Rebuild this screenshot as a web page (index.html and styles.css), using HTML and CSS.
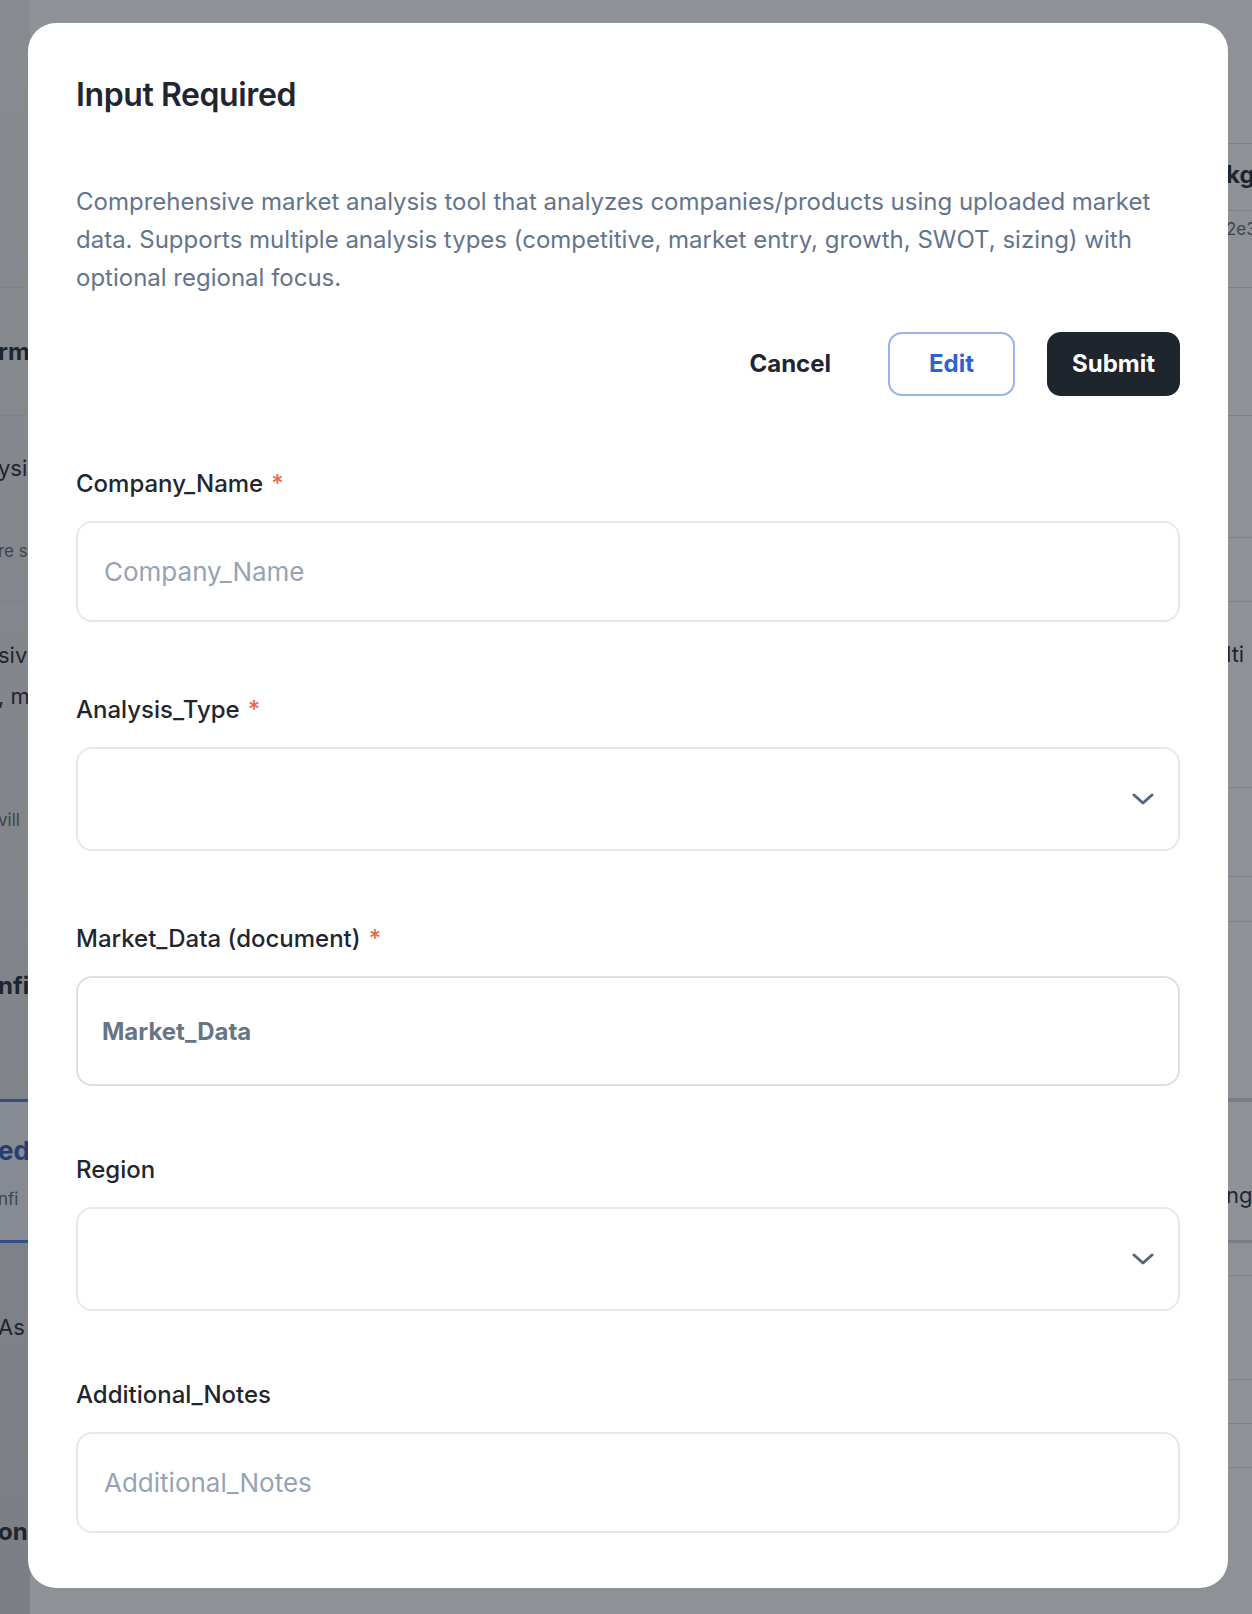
FILE: index.html
```html
<!DOCTYPE html>
<html lang="en">
<head>
<meta charset="utf-8">
<title>Input Required</title>
<link rel="stylesheet" href="styles.css">
</head>
<body>
<div class="page">
  <div class="bg-col bg-left">
    <div class="row" style="height:288px"></div>
    <div class="row" style="height:128px"><div class="frag bold pad" style="padding-top:49px">rmation</div></div>
    <div class="row" style="height:186px"><div class="frag" style="padding-top:37px">ysis</div><div class="frag small" style="margin-top:56px">re s</div></div>
    <div class="row" style="height:186px"><div class="frag tall" style="padding-top:33px">sive</div><div class="frag tall">, m</div></div>
    <div class="row" style="height:89px"><div class="frag small" style="padding-top:20px">vill</div></div>
    <div class="row" style="height:45px"></div>
    <div class="row" style="height:177px"><div class="frag bold" style="padding-top:49px">nfi</div></div>
    <div class="row row-selected" style="height:144px"><div class="frag bold blue" style="padding-top:32px">ed</div><div class="frag small" style="margin-top:19px">nfi</div></div>
    <div class="row" style="height:33px"></div>
    <div class="row" style="height:104px"><div class="frag" style="padding-top:36px">As</div></div>
    <div class="row" style="height:44px"></div>
    <div class="row row-last"><div class="frag bold" style="padding-top:93px">on</div></div>
  </div>
  <div class="bg-col bg-right">
    <div class="row" style="height:144px"></div>
    <div class="row" style="height:67px"><div class="frag bold shift" style="padding-top:16px">kg</div></div>
    <div class="row" style="height:77px"><div class="frag small shift" style="padding-top:6px">2e3</div></div>
    <div class="row" style="height:128px"></div>
    <div class="row" style="height:122px"></div>
    <div class="row" style="height:64px"></div>
    <div class="row" style="height:186px"><div class="frag shift" style="padding-top:37px">lti</div></div>
    <div class="row" style="height:89px"></div>
    <div class="row" style="height:45px"></div>
    <div class="row" style="height:177px"></div>
    <div class="row row-thick" style="height:144px"><div class="frag shift" style="padding-top:78px">ng</div></div>
    <div class="row" style="height:33px"></div>
    <div class="row" style="height:104px"></div>
    <div class="row" style="height:44px"></div>
    <div class="row" style="height:44px"></div>
    <div class="row row-last"></div>
  </div>
</div>

<div class="overlay">
  <div class="modal" role="dialog" aria-labelledby="modal-title">
    <h2 class="modal-title" id="modal-title">Input Required</h2>
    <p class="modal-desc">Comprehensive market analysis tool that analyzes companies/products using uploaded market data. Supports multiple analysis types (competitive, market entry, growth, SWOT, sizing) with optional regional focus.</p>
    <div class="actions">
      <button class="btn btn-ghost" type="button">Cancel</button>
      <button class="btn btn-outline" type="button">Edit</button>
      <button class="btn btn-primary" type="button">Submit</button>
    </div>
    <form class="fields">
      <div class="field">
        <label class="label required" for="company">Company_Name<span class="req">*</span></label>
        <input class="control input" id="company" type="text" placeholder="Company_Name">
      </div>
      <div class="field">
        <label class="label required">Analysis_Type<span class="req">*</span></label>
        <div class="control select">
          <svg class="chevron" width="22" height="12" viewBox="0 0 22 12" aria-hidden="true"><path d="M2 2 L11 10 L20 2" fill="none" stroke="#56657a" stroke-width="3" stroke-linecap="round" stroke-linejoin="round"/></svg>
        </div>
      </div>
      <div class="field">
        <label class="label required">Market_Data (document)<span class="req">*</span></label>
        <div class="control file">Market_Data</div>
      </div>
      <div class="field">
        <label class="label">Region</label>
        <div class="control select">
          <svg class="chevron" width="22" height="12" viewBox="0 0 22 12" aria-hidden="true"><path d="M2 2 L11 10 L20 2" fill="none" stroke="#56657a" stroke-width="3" stroke-linecap="round" stroke-linejoin="round"/></svg>
        </div>
      </div>
      <div class="field">
        <label class="label" for="notes">Additional_Notes</label>
        <input class="control input" id="notes" type="text" placeholder="Additional_Notes">
      </div>
    </form>
  </div>
</div>
</body>
</html>
```

FILE: styles.css
```css
* { box-sizing: border-box; }

html, body {
  margin: 0;
  padding: 0;
  height: 100%;
  overflow: hidden;
}

body {
  font-family: Inter, "Noto Sans", "Liberation Sans", sans-serif;
  background: #ffffff;
  color: #1f2630;
}

/* background page (seen through the overlay) */
.page {
  display: flex;
  justify-content: space-between;
  height: 1614px;
  overflow: hidden;
}

.bg-col {
  width: 30px;
  display: flex;
  flex-direction: column;
  overflow: hidden;
}

.bg-left {
  background: linear-gradient(180deg, #f1f3f5 0%, #e6e8eb 55%, #d9dbdf 100%);
}

.bg-right {
  width: 26px;
  background: #ffffff;
}

.row {
  flex: none;
  border-bottom: 1px solid #dfe1e5;
  white-space: nowrap;
}

.row-last {
  flex: 1;
  border-bottom: 0;
}

.row-selected {
  border-top: 3px solid #4a76e0;
  border-bottom: 3px solid #4a76e0;
  background: #edf1fa;
}

.row-thick {
  border-top: 3px solid #d4d7dc;
  border-bottom: 3px solid #d4d7dc;
}

.frag {
  font-size: 22px;
  line-height: 30px;
  color: #1f2630;
  margin-left: -2px;
}

.frag.tall { line-height: 41px; }
.frag.bold { font-weight: 700; font-size: 24px; }
.frag.small { font-size: 17px; line-height: 24px; color: #5d646e; }
.frag.blue { color: #2f56b8; font-size: 26px; line-height: 34px; }
.frag.shift { margin-left: 0; }

/* overlay + dialog */
.overlay {
  position: fixed;
  inset: 0;
  background: rgba(30, 36, 44, 0.5);
  padding: 23px 0 0 28px;
}

.modal {
  width: 1200px;
  height: 1565px;
  background: #ffffff;
  border-radius: 28px;
  padding: 52px 48px 56px;
}

.modal-title {
  margin: 0;
  font-size: 32px;
  line-height: 40px;
  font-weight: 600;
  color: #1f2630;
  letter-spacing: -0.4px;
}

.modal-desc {
  margin: 68px 0 35px;
  font-size: 24px;
  line-height: 38px;
  color: #64748b;
}

.actions {
  display: flex;
  justify-content: flex-end;
  gap: 32px;
}

.btn {
  min-width: 127px;
  height: 64px;
  padding: 0 23px;
  border-radius: 14px;
  border: 2px solid transparent;
  background: transparent;
  font-family: inherit;
  font-size: 24px;
  font-weight: 700;
  line-height: 30px;
  cursor: pointer;
}

.btn-ghost { color: #1f2630; }

.btn-outline {
  background: #ffffff;
  border-color: #98b2ea;
  color: #2f63d1;
}

.btn-primary {
  background: #1f252d;
  border-color: #1f252d;
  color: #ffffff;
}

.fields {
  display: flex;
  flex-direction: column;
  gap: 68px;
  margin: 68px 0 0;
}

.field {
  display: flex;
  flex-direction: column;
}

.label {
  display: block;
  font-size: 24px;
  line-height: 32px;
  font-weight: 500;
  color: #1f2630;
  margin-bottom: 21px;
}

.label.required { padding-top: 4px; }

.req {
  color: #ec6a45;
  margin-left: 8px;
}

.control {
  width: 100%;
  border: 2px solid #e7e8eb;
  border-radius: 16px;
  background: #ffffff;
}

.input {
  height: 101px;
  padding: 0 26px;
  font-family: inherit;
  font-size: 26px;
  color: #1f2630;
  outline: none;
}

.input::placeholder { color: #97a3b4; }

.select {
  height: 104px;
  display: flex;
  align-items: center;
  justify-content: flex-end;
  padding-right: 24px;
}

.chevron { display: block; }

.file {
  height: 110px;
  display: flex;
  align-items: center;
  padding: 0 24px;
  font-size: 24px;
  font-weight: 700;
  color: #667585;
  border-color: #dce0e6;
}
```
